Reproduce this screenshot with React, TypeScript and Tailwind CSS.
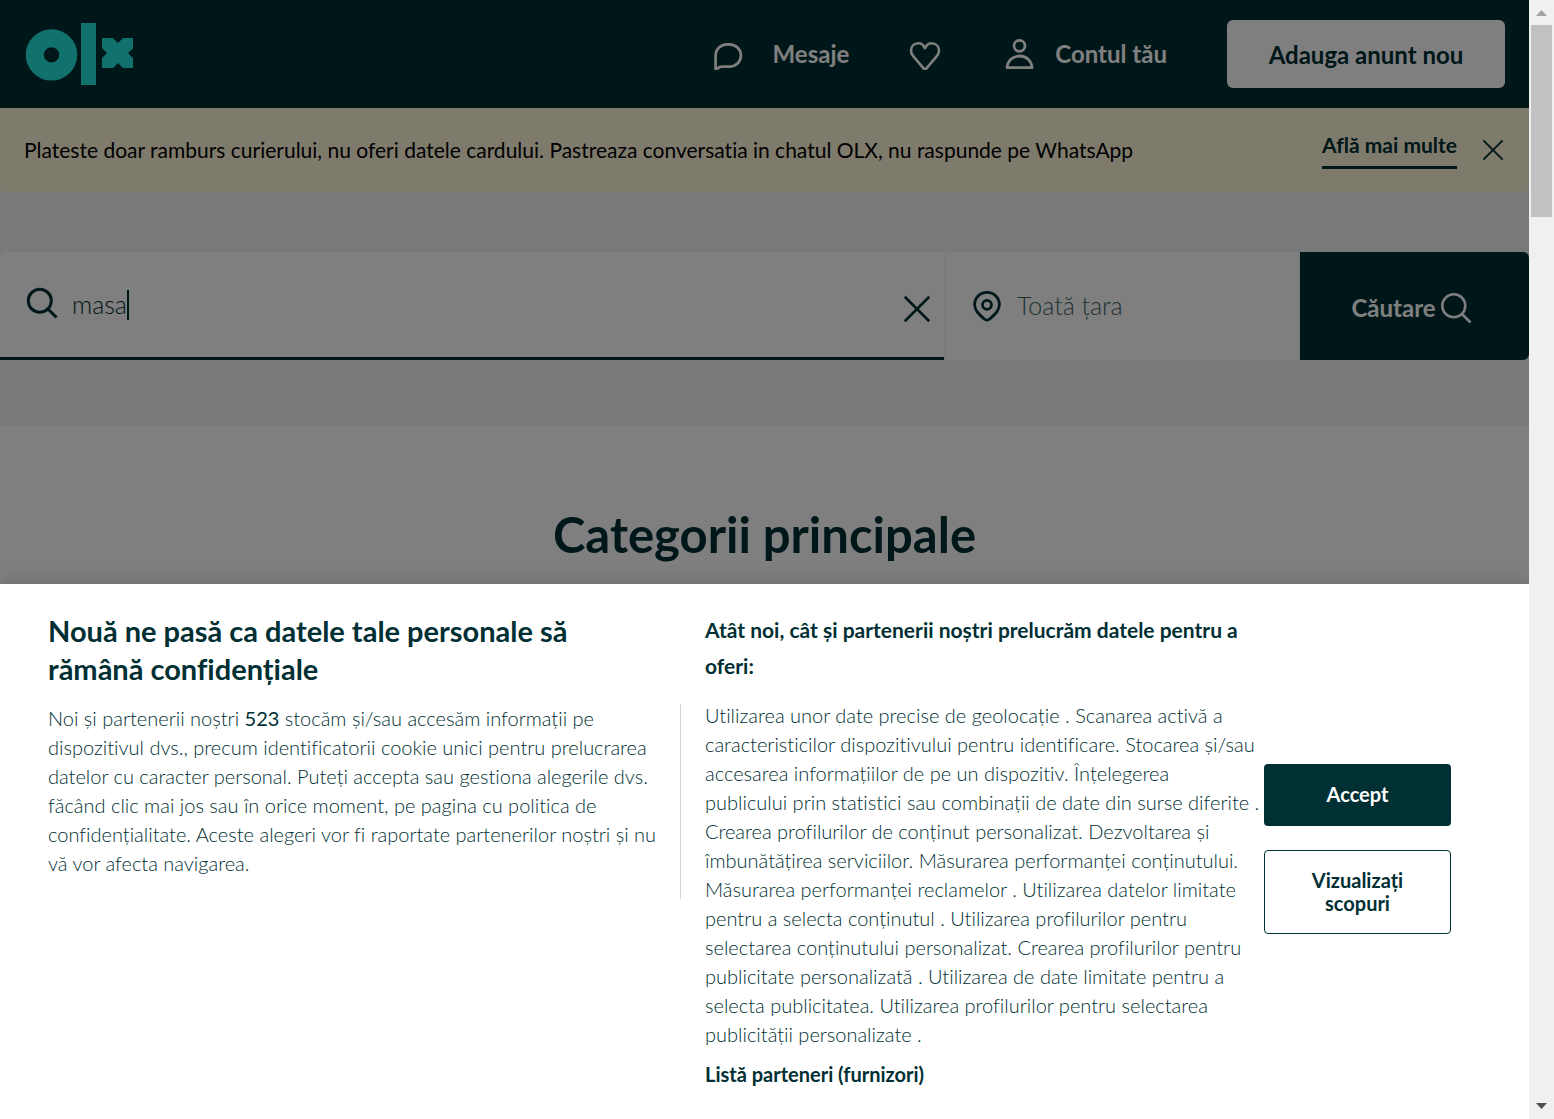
import React from "react";

const purposes = [
  "Utilizarea unor date precise de geolocație . Scanarea activă a",
  "caracteristicilor dispozitivului pentru identificare. Stocarea și/sau",
  "accesarea informațiilor de pe un dispozitiv. Înțelegerea",
  "publicului prin statistici sau combinații de date din surse diferite .",
  "Crearea profilurilor de conținut personalizat. Dezvoltarea și",
  "îmbunătățirea serviciilor. Măsurarea performanței conținutului.",
  "Măsurarea performanței reclamelor . Utilizarea datelor limitate",
  "pentru a selecta conținutul . Utilizarea profilurilor pentru",
  "selectarea conținutului personalizat. Crearea profilurilor pentru",
  "publicitate personalizată . Utilizarea de date limitate pentru a",
  "selecta publicitatea. Utilizarea profilurilor pentru selectarea",
  "publicității personalizate .",
];

function Logo() {
  return (
    <svg width="108" height="62" viewBox="0 0 108 62" fill="#23e5db" aria-hidden="true">
      <path
        fillRule="evenodd"
        d="M25.5 6.2a25.7 25.7 0 1 0 0 51.4a25.7 25.7 0 1 0 0-51.4zM25.5 24.2a7.7 7.7 0 1 1 0 15.4a7.7 7.7 0 1 1 0-15.4z"
      />
      <path d="M55 0h15v62H55z" />
      <path d="M76 15h11l5 5 5-5h10v10.500l-5 4.500 5 5V45H97l-5-5-5 5H76V35l5-5-5-5z" />
    </svg>
  );
}

function ChatIcon() {
  return (
    <svg width="32" height="32" viewBox="0 0 32 32" fill="none" stroke="white" strokeWidth="2.7" strokeLinejoin="round" aria-hidden="true">
      <path d="M2.600 31V17.500C2.600 11 7.800 6.300 14.100 6.300h2C22.800 6.300 27.900 11 27.900 17.500S22.800 28.600 16.300 28.600H8.800c-2.400 0-3.700 2.100-6.200 2.400z" />
    </svg>
  );
}

function HeartIcon() {
  return (
    <svg width="32" height="32" viewBox="0 0 32 32" fill="none" stroke="white" strokeWidth="2.6" strokeLinejoin="round" aria-hidden="true">
      <path d="M16 10.200C14.500 6.800 12.300 5.200 9.500 5.200 5 5.200 2 8.400 2 12.700c0 2.300.8 3.900 2.200 5.500L14.600 30.400c.8.900 2 .9 2.800 0l10.400-12.200c1.400-1.600 2.200-3.200 2.200-5.500 0-4.300-3-7.500-7.500-7.500-2.800 0-5 1.600-6.500 5z" />
    </svg>
  );
}

function UserIcon() {
  return (
    <svg width="32" height="32" viewBox="0 0 32 32" fill="none" stroke="white" strokeWidth="2.800" strokeLinejoin="round" aria-hidden="true">
      <circle cx="16.500" cy="7.800" r="5.500" />
      <path d="M4 29.700C4.600 23 9.500 18 16.500 18s12 5 12.600 11.700z" />
    </svg>
  );
}

function SearchIcon({ thick }: { thick?: boolean }) {
  return (
    <svg
      className={thick ? "mb-1" : ""}
      width="32"
      height="32"
      viewBox="0 0 32 32"
      fill="none"
      stroke="currentColor"
      strokeWidth={thick ? 3 : 2.6}
      aria-hidden="true"
    >
      <circle cx="13.800" cy="13.800" r="11.500" />
      <path d="M22 22L30.500 30.500" />
    </svg>
  );
}

function CloseIcon({ className }: { className: string }) {
  return (
    <svg className={className} viewBox="0 0 24 24" fill="none" stroke="currentColor" strokeWidth="2.200" aria-hidden="true">
      <path d="M1.500 1.500L22.500 22.500M22.500 1.500L1.500 22.500" />
    </svg>
  );
}

function PinIcon() {
  return (
    <svg width="32" height="32" viewBox="0 0 32 32" fill="none" stroke="currentColor" strokeWidth="2.800" aria-hidden="true">
      <path d="M16 2.400C8.800 2.400 3.600 7.800 3.600 14.600c0 5.200 3.400 8.800 9.400 14.200 2 1.800 4 1.800 6 0 6-5.400 9.400-9 9.400-14.200C28.400 7.800 23.200 2.400 16 2.400z" />
      <circle cx="16" cy="14.800" r="4.500" />
    </svg>
  );
}

function Header() {
  return (
    <header className="flex h-[108px] items-center bg-[#002f34] pr-6 pl-[26px] text-white">
      <a href="#" aria-label="OLX">
        <Logo />
      </a>
      <nav className="ml-auto flex items-center text-2xl font-bold">
        <a href="#" className="flex items-center gap-7">
          <ChatIcon />
          Mesaje
        </a>
        <a href="#" aria-label="Favorite" className="ml-[60px]">
          <HeartIcon />
        </a>
        <a href="#" className="ml-[62px] flex items-center gap-5">
          <UserIcon />
          Contul tău
        </a>
      </nav>
      <button className="ml-[60px] h-[68px] w-[278px] rounded-md bg-white pt-0.5 text-2xl font-bold text-[#002f34]">
        Adauga anunt nou
      </button>
    </header>
  );
}

function Notice() {
  return (
    <div className="flex h-[84px] items-center rounded-b-md bg-[#fff6d9] pr-[25px] pl-6 text-[#002f34]">
      <p className="text-[21px] text-black">
        Plateste doar ramburs curierului, nu oferi datele cardului. Pastreaza conversatia in chatul OLX, nu raspunde pe
        WhatsApp
      </p>
      <a href="#" className="ml-auto border-b-3 border-[#002f34] pb-[7px] text-[21px] leading-7 font-bold">
        Află mai multe
      </a>
      <button aria-label="Închide" className="ml-[25px]">
        <CloseIcon className="size-[22px]" />
      </button>
    </div>
  );
}

function SearchBar() {
  return (
    <div className="bg-[#f0f4f3] pt-[60px] pb-[66px] text-[#002f34]">
      <form className="flex h-[108px]">
        <div className="flex flex-1 items-center rounded-tl-md border-b-3 border-[#002f34] bg-white pr-[13px] pl-[26px]">
          <SearchIcon thick />
          <input
            aria-label="Ce anume cauți?"
            defaultValue="masa"
            className="ml-3.5 field-sizing-content text-[25px] font-light outline-none"
          />
          <span className="h-[30px] w-0.5 bg-[#002f34]" />
          <button type="button" aria-label="Șterge" className="mt-2 ml-auto">
            <CloseIcon className="size-7" />
          </button>
        </div>
        <label className="mr-0.5 ml-px flex w-[353px] items-center gap-3.5 bg-white pl-[26px]">
          <PinIcon />
          <input
            aria-label="Localitate"
            placeholder="Toată țara"
            className="w-60 text-[25px] font-light outline-none placeholder:text-[#406367]"
          />
        </label>
        <button
          type="button"
          className="flex w-[229px] items-center justify-center gap-1 rounded-r-md bg-[#002f34] pt-1 pr-1.5 text-2xl font-bold text-white"
        >
          Căutare
          <SearchIcon />
        </button>
      </form>
    </div>
  );
}

function CookieDialog() {
  return (
    <section
      role="dialog"
      aria-labelledby="cookie-title"
      className="absolute inset-x-0 bottom-0 flex bg-white pr-[78px] pb-[30px] pl-12 text-[#002f34] shadow-[0_0_18px_rgba(0,0,0,0.2)]"
    >
      <div className="min-w-0 flex-1 pt-7">
        <h2 id="cookie-title" className="text-[29px] leading-[38px] font-bold">
          Nouă ne pasă ca datele tale personale să
          <br />
          rămână confidențiale
        </h2>
        <p className="mt-4 text-[20px] leading-[29px] font-light whitespace-nowrap">
          Noi și partenerii noștri <b>523</b> stocăm și/sau accesăm informații pe
          <br />
          dispozitivul dvs., precum identificatorii cookie unici pentru prelucrarea
          <br />
          datelor cu caracter personal. Puteți accepta sau gestiona alegerile dvs.
          <br />
          făcând clic mai jos sau în orice moment, pe pagina cu politica de
          <br />
          confidențialitate. Aceste alegeri vor fi raportate partenerilor noștri și nu
          <br />
          vă vor afecta navigarea.
        </p>
      </div>
      <div className="mt-[120px] h-[195px] w-px bg-[#d8d8d8]" />
      <div className="w-[583px] pt-7 pl-6">
        <h3 className="text-[21px] leading-9 font-bold">
          Atât noi, cât și partenerii noștri prelucrăm datele pentru a
          <br />
          oferi:
        </h3>
        <p className="mt-[17px] text-[20px] leading-[29px] font-light whitespace-nowrap">
          {purposes.map((line) => (
            <React.Fragment key={line}>
              {line}
              <br />
            </React.Fragment>
          ))}
        </p>
        <button className="mt-2.5 text-[20px] leading-[30px] font-bold">Listă parteneri (furnizori)</button>
      </div>
      <div className="mt-[180px] flex w-[187px] flex-col gap-6">
        <button className="rounded-sm bg-[#002f34] pt-[18px] pb-5 text-[20px] leading-6 font-bold text-white">
          Accept
        </button>
        <button className="rounded-sm border border-[#002f34] px-8 py-[18px] text-[20px] leading-[23px] font-bold">
          Vizualizați scopuri
        </button>
      </div>
    </section>
  );
}

function Scrollbar() {
  return (
    <div aria-hidden="true" className="flex w-[25px] flex-col items-center bg-[#f0f0f0]">
      <svg width="25" height="25" viewBox="0 0 25 25" fill="#a3a3a3">
        <path d="M7 16L12.500 10L18 16z" />
      </svg>
      <div className="h-48 w-[21px] bg-[#c1c1c1]" />
      <svg className="mt-auto" width="25" height="25" viewBox="0 0 25 25" fill="#505050">
        <path d="M7 9H18L12.500 15z" />
      </svg>
    </div>
  );
}

export default function App() {
  return (
    <div className="flex h-screen overflow-hidden font-['Lato',sans-serif] [font-variant-ligatures:no-common-ligatures]">
      <div className="relative min-w-0 flex-1 overflow-hidden bg-[#f0f4f3]">
        <Header />
        <Notice />
        <SearchBar />
        <main className="h-full bg-white pt-[76px] text-center">
          <h1 className="text-[49px] leading-[64px] font-bold text-[#002f34]">Categorii principale</h1>
        </main>
        <div className="absolute inset-0 bg-black/50" />
        <CookieDialog />
      </div>
      <Scrollbar />
    </div>
  );
}
